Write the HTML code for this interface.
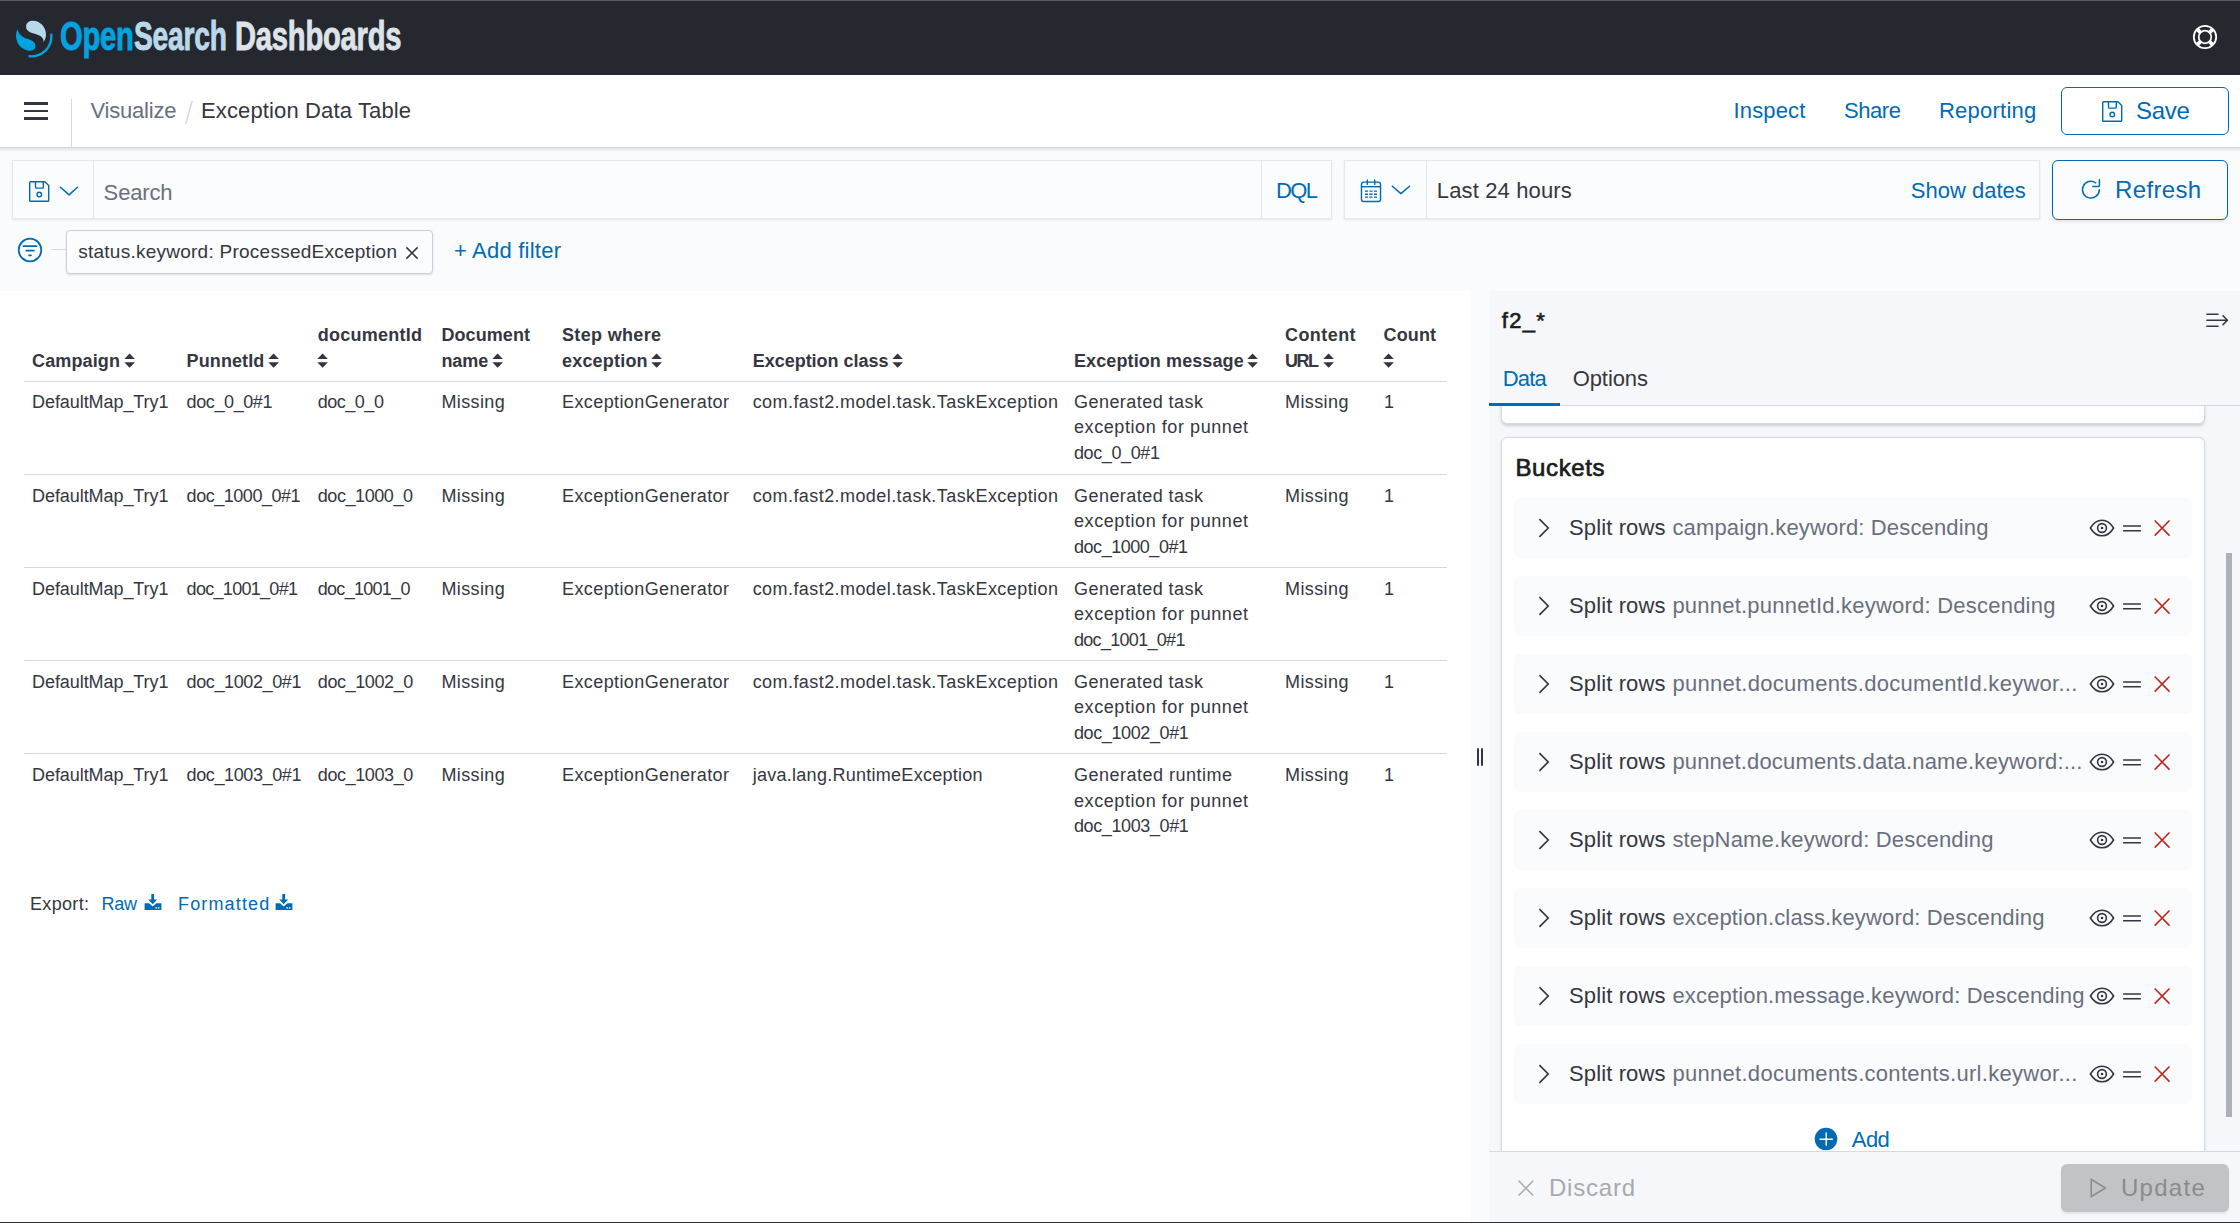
<!DOCTYPE html>
<html><head><meta charset="utf-8"><title>Exception Data Table - OpenSearch Dashboards</title>
<style>
html,body{margin:0;padding:0;width:2240px;height:1223px;overflow:hidden;background:#fff}
body{position:relative;font-family:"Liberation Sans",sans-serif;-webkit-font-smoothing:antialiased}
.t{position:absolute;white-space:nowrap}
svg{display:block}
</style></head><body>
<div style="position:absolute;left:0px;top:0px;width:2240px;height:75px;background:#25282f"></div>
<div style="position:absolute;left:0px;top:0px;width:2240px;height:1px;background:#5b5b59"></div>
<svg style="position:absolute;left:0px;top:0px" width="60" height="62" viewBox="0 0 60 62">
<path d="M43.4 42 C44.5 38 40 35 34 33.5 C29 32.3 26 30 26.1 26.5 C26.2 22.5 29.5 20.8 33 20.8 C40 20.8 46.2 27 46 35 C45.9 38 44.8 40.5 43.4 42 Z" fill="#b9d9eb"/>
<path d="M17.7 29.2 C15.2 33 15.5 40 19 45 C22 49 27 51 30.5 50.8 C34 50.6 35.6 48 35.4 45.5 C35.2 42 32 40.2 28 39 C23 37.5 18.5 35 17.7 29.2 Z" fill="#00a3e0"/>
<path d="M29.6 56.3 A20 20 0 0 0 51.3 34.8" stroke="#00a3e0" stroke-width="2.4" fill="none" stroke-linecap="round"/>
</svg>
<div class="t" style="left:59.5px;top:16.00px;font-size:40px;line-height:40px;color:#00a3e0;font-weight:700;transform-origin:0 0;transform:scaleX(0.7288);letter-spacing:-0.3px;-webkit-text-stroke:0.9px #00a3e0">Open</div>
<div class="t" style="left:134px;top:16.00px;font-size:40px;line-height:40px;color:#b9d9eb;font-weight:700;transform-origin:0 0;transform:scaleX(0.7045);letter-spacing:-0.3px;-webkit-text-stroke:0.9px #b9d9eb">Search</div>
<div class="t" style="left:235px;top:16.00px;font-size:40px;line-height:40px;color:#dde3e8;font-weight:700;transform-origin:0 0;transform:scaleX(0.7289);letter-spacing:-0.3px;-webkit-text-stroke:0.9px #dde3e8">Dashboards</div>
<svg style="position:absolute;left:2191px;top:23px" width="28" height="28" viewBox="0 0 28 28">
<circle cx="14" cy="14" r="11.2" stroke="#fff" stroke-width="1.8" fill="none"/>
<circle cx="14" cy="14" r="6.3" stroke="#fff" stroke-width="1.7" fill="none"/>
<path d="M6.4 6.4 L9.6 9.6 M21.6 6.4 L18.4 9.6 M6.4 21.6 L9.6 18.4 M21.6 21.6 L18.4 18.4" stroke="#fff" stroke-width="3.8"/>
</svg>
<div style="position:absolute;left:0px;top:75px;width:2240px;height:72px;background:#fff"></div>
<div style="position:absolute;left:24px;top:102px;width:24px;height:2.6px;background:#343741"></div>
<div style="position:absolute;left:24px;top:109.9px;width:24px;height:2.6px;background:#343741"></div>
<div style="position:absolute;left:24px;top:117.3px;width:24px;height:2.6px;background:#343741"></div>
<div style="position:absolute;left:71px;top:99px;width:1px;height:48px;background:#d3dae6"></div>
<div class="t" style="left:90.50px;top:100.00px;font-size:22px;line-height:22px;color:#69707d;font-weight:400;letter-spacing:-0.206px;">Visualize</div>
<svg style="position:absolute;left:180px;top:96px" width="20" height="32" viewBox="0 0 20 32"><path d="M12.0 5.4 L5.9 27.4" stroke="#d3dae6" stroke-width="1.6" stroke-linecap="round"/></svg>
<div class="t" style="left:201.00px;top:100.00px;font-size:22px;line-height:22px;color:#343741;font-weight:400;letter-spacing:0.131px;">Exception Data Table</div>
<div class="t" style="left:1733.50px;top:100.00px;font-size:22px;line-height:22px;color:#006bb4;font-weight:400;letter-spacing:0.145px;">Inspect</div>
<div class="t" style="left:1844.00px;top:100.00px;font-size:22px;line-height:22px;color:#006bb4;font-weight:400;letter-spacing:-0.427px;">Share</div>
<div class="t" style="left:1939.00px;top:100.00px;font-size:22px;line-height:22px;color:#006bb4;font-weight:400;letter-spacing:0.226px;">Reporting</div>
<div style="position:absolute;left:2061px;top:87.3px;width:167.7px;height:47.6px;box-sizing:border-box;border:1.5px solid #006bb4;border-radius:6px;background:#fff"></div>
<svg style="position:absolute;left:2099.60px;top:98.60px" width="26" height="26" viewBox="0 0 26 26">
<path d="M2.7 3.5 Q2.7 2.7 3.5 2.7 H17.9 L21.7 6.5 V21.5 Q21.7 22.3 20.9 22.3 H3.5 Q2.7 22.3 2.7 21.5 Z" stroke="#006bb4" stroke-width="1.4" fill="none" stroke-linejoin="round"/>
<path d="M8.5 2.7 V8.3 Q8.5 9.1 9.3 9.1 H15.5 Q16.3 9.1 16.3 8.3 V2.7" stroke="#006bb4" stroke-width="1.4" fill="none"/>
<circle cx="12.3" cy="15.5" r="2.3" stroke="#006bb4" stroke-width="1.4" fill="none"/>
</svg>
<div class="t" style="left:2136.00px;top:99.00px;font-size:24px;line-height:24px;color:#006bb4;font-weight:400;letter-spacing:-0.301px;">Save</div>
<div style="position:absolute;left:0px;top:147px;width:2240px;height:144px;background:#fafbfd"></div>
<div style="position:absolute;left:12px;top:160.4px;width:1319.6px;height:58.6px;box-sizing:border-box;background:#fbfcfd;border:1px solid #e4e8ef;box-shadow:0 1px 2px rgba(152,162,179,.25)"></div>
<div style="position:absolute;left:93px;top:161px;width:1px;height:57.5px;background:#e3e7ee"></div>
<div style="position:absolute;left:1260.5px;top:161px;width:1px;height:57.5px;background:#e3e7ee"></div>
<svg style="position:absolute;left:26.70px;top:178.50px" width="26" height="26" viewBox="0 0 26 26">
<path d="M2.7 3.5 Q2.7 2.7 3.5 2.7 H17.9 L21.7 6.5 V21.5 Q21.7 22.3 20.9 22.3 H3.5 Q2.7 22.3 2.7 21.5 Z" stroke="#006bb4" stroke-width="1.4" fill="none" stroke-linejoin="round"/>
<path d="M8.5 2.7 V8.3 Q8.5 9.1 9.3 9.1 H15.5 Q16.3 9.1 16.3 8.3 V2.7" stroke="#006bb4" stroke-width="1.4" fill="none"/>
<circle cx="12.3" cy="15.5" r="2.3" stroke="#006bb4" stroke-width="1.4" fill="none"/>
</svg>
<svg style="position:absolute;left:56px;top:182px" width="26" height="18" viewBox="0 0 26 18">
<path d="M4.4 5.2 L13.1 12.9 L21.4 5.2" stroke="#006bb4" stroke-width="1.5" fill="none" stroke-linecap="round" stroke-linejoin="round"/>
</svg>
<div class="t" style="left:103.60px;top:182.00px;font-size:22px;line-height:22px;color:#69707d;font-weight:400;letter-spacing:-0.141px;">Search</div>
<div class="t" style="left:1276.00px;top:180.00px;font-size:22px;line-height:22px;color:#006bb4;font-weight:400;letter-spacing:-1.618px;">DQL</div>
<div style="position:absolute;left:1344.3px;top:160.4px;width:695.3px;height:58.6px;box-sizing:border-box;background:#fbfcfd;border:1px solid #e4e8ef;box-shadow:0 1px 2px rgba(152,162,179,.25)"></div>
<div style="position:absolute;left:1425.5px;top:161px;width:1px;height:57.5px;background:#e3e7ee"></div>
<svg style="position:absolute;left:1352px;top:172px" width="70" height="38" viewBox="0 0 70 38">
<rect x="9.45" y="10.1" width="19.1" height="19.4" rx="2.3" stroke="#006bb4" stroke-width="1.4" fill="none"/>
<path d="M9.45 14.7 H28.55" stroke="#006bb4" stroke-width="1.4"/>
<path d="M15.3 8.0 V12.4 M22.7 8.0 V12.4" stroke="#006bb4" stroke-width="1.4" stroke-linecap="round"/>
<path d="M13 19.1 H16 M17.4 19.1 H20.5 M22 19.1 H25 M13 22.2 H16 M17.4 22.2 H20.5 M22 22.2 H25 M13 25.1 H16 M17.4 25.1 H20.5 M22 25.1 H25" stroke="#006bb4" stroke-width="1.4"/>
<path d="M40.3 14.2 L48.9 21.6 L57.5 14.2" stroke="#006bb4" stroke-width="1.5" fill="none" stroke-linecap="round" stroke-linejoin="round"/>
</svg>
<div class="t" style="left:1436.80px;top:180.00px;font-size:22px;line-height:22px;color:#343741;font-weight:400;letter-spacing:0.141px;">Last 24 hours</div>
<div class="t" style="left:1910.80px;top:180.00px;font-size:22px;line-height:22px;color:#006bb4;font-weight:400;letter-spacing:0.004px;">Show dates</div>
<div style="position:absolute;left:2052.3px;top:160px;width:176.2px;height:59.6px;box-sizing:border-box;border:1.5px solid #006bb4;border-radius:6px;background:#fbfcfd;box-shadow:0 2px 3px rgba(152,162,179,.25)"></div>
<svg style="position:absolute;left:2072px;top:172px" width="38" height="36" viewBox="0 0 38 36">
<path d="M23.72 10.78 A8.4 8.4 0 1 0 27.3 17.66" stroke="#006bb4" stroke-width="1.5" fill="none" stroke-linecap="round"/>
<path d="M27.4 7.8 V13.4 Q27.4 14.4 26.4 14.4 H20.8" stroke="#006bb4" stroke-width="1.5" fill="none" stroke-linecap="round"/>
</svg>
<div class="t" style="left:2115.00px;top:178.00px;font-size:24px;line-height:24px;color:#006bb4;font-weight:400;letter-spacing:0.361px;">Refresh</div>
<div style="position:absolute;left:0px;top:147px;width:2240px;height:1px;background:#d3dae6"></div>
<div style="position:absolute;left:0px;top:148px;width:2240px;height:4px;background:linear-gradient(180deg,rgba(200,206,216,.55),rgba(250,251,253,0))"></div>
<svg style="position:absolute;left:16px;top:236px" width="28" height="28" viewBox="0 0 28 28">
<circle cx="14" cy="14" r="11.3" stroke="#006bb4" stroke-width="1.8" fill="none"/>
<path d="M7.4 10.1 H20.6 M10.3 14.7 H17.9 M13.0 19.3 H15.0" stroke="#006bb4" stroke-width="1.7" stroke-linecap="round"/>
</svg>
<div style="position:absolute;left:51px;top:248.6px;width:15px;height:1.3px;background:#d3dae6"></div>
<div style="position:absolute;left:66px;top:229.5px;width:367px;height:44.2px;box-sizing:border-box;background:#fbfcfd;border:1.5px solid #c9d0dc;border-radius:4px;box-shadow:0 1px 2px rgba(152,162,179,.35)"></div>
<div class="t" style="left:78.20px;top:242.00px;font-size:19px;line-height:19px;color:#343741;font-weight:400;letter-spacing:0.252px;">status.keyword: ProcessedException</div>
<svg style="position:absolute;left:404px;top:244.5px" width="16" height="16" viewBox="0 0 16 16">
<path d="M2.4 2.4 L13.6 13.6 M13.6 2.4 L2.4 13.6" stroke="#343741" stroke-width="1.5"/>
</svg>
<div class="t" style="left:454.00px;top:240.00px;font-size:22px;line-height:22px;color:#006bb4;font-weight:400;letter-spacing:0.000px;">+</div>
<div class="t" style="left:472.00px;top:240.00px;font-size:22px;line-height:22px;color:#006bb4;font-weight:400;letter-spacing:0.242px;">Add filter</div>
<div style="position:absolute;left:0px;top:291px;width:1471px;height:932px;background:#fff"></div>
<div style="position:absolute;left:1471px;top:291px;width:18px;height:932px;background:#fafbfd"></div>
<div style="position:absolute;left:1476.9px;top:748px;width:1.9px;height:18px;background:#343741;border-radius:1px"></div>
<div style="position:absolute;left:1481.3px;top:748px;width:1.9px;height:18px;background:#343741;border-radius:1px"></div>
<div class="t" style="left:32.00px;top:352.00px;font-size:18px;line-height:18px;color:#343741;font-weight:700;letter-spacing:0.141px;">Campaign</div>
<svg style="position:absolute;left:123.5px;top:353.0px" width="12" height="16" viewBox="0 0 12 16">
<path d="M5.6 0.4 L10.9 6.0 H0.3 Z M5.6 14.7 L10.9 9.2 H0.3 Z" fill="#343741"/>
</svg>
<div class="t" style="left:186.60px;top:352.00px;font-size:18px;line-height:18px;color:#343741;font-weight:700;letter-spacing:0.101px;">PunnetId</div>
<svg style="position:absolute;left:267.8px;top:353.0px" width="12" height="16" viewBox="0 0 12 16">
<path d="M5.6 0.4 L10.9 6.0 H0.3 Z M5.6 14.7 L10.9 9.2 H0.3 Z" fill="#343741"/>
</svg>
<div class="t" style="left:317.80px;top:326.00px;font-size:18px;line-height:18px;color:#343741;font-weight:700;letter-spacing:0.245px;">documentId</div>
<svg style="position:absolute;left:317.3px;top:353.0px" width="12" height="16" viewBox="0 0 12 16">
<path d="M5.6 0.4 L10.9 6.0 H0.3 Z M5.6 14.7 L10.9 9.2 H0.3 Z" fill="#343741"/>
</svg>
<div class="t" style="left:441.40px;top:326.00px;font-size:18px;line-height:18px;color:#343741;font-weight:700;letter-spacing:0.085px;">Document</div>
<div class="t" style="left:441.40px;top:352.00px;font-size:18px;line-height:18px;color:#343741;font-weight:700;letter-spacing:-0.074px;">name</div>
<svg style="position:absolute;left:491.7px;top:353.0px" width="12" height="16" viewBox="0 0 12 16">
<path d="M5.6 0.4 L10.9 6.0 H0.3 Z M5.6 14.7 L10.9 9.2 H0.3 Z" fill="#343741"/>
</svg>
<div class="t" style="left:562.00px;top:326.00px;font-size:18px;line-height:18px;color:#343741;font-weight:700;letter-spacing:0.330px;">Step where</div>
<div class="t" style="left:562.00px;top:352.00px;font-size:18px;line-height:18px;color:#343741;font-weight:700;letter-spacing:0.197px;">exception</div>
<svg style="position:absolute;left:651.1px;top:353.0px" width="12" height="16" viewBox="0 0 12 16">
<path d="M5.6 0.4 L10.9 6.0 H0.3 Z M5.6 14.7 L10.9 9.2 H0.3 Z" fill="#343741"/>
</svg>
<div class="t" style="left:752.70px;top:352.00px;font-size:18px;line-height:18px;color:#343741;font-weight:700;letter-spacing:-0.019px;">Exception class</div>
<svg style="position:absolute;left:892.0px;top:353.0px" width="12" height="16" viewBox="0 0 12 16">
<path d="M5.6 0.4 L10.9 6.0 H0.3 Z M5.6 14.7 L10.9 9.2 H0.3 Z" fill="#343741"/>
</svg>
<div class="t" style="left:1074.00px;top:352.00px;font-size:18px;line-height:18px;color:#343741;font-weight:700;letter-spacing:0.102px;">Exception message</div>
<svg style="position:absolute;left:1247.2px;top:353.0px" width="12" height="16" viewBox="0 0 12 16">
<path d="M5.6 0.4 L10.9 6.0 H0.3 Z M5.6 14.7 L10.9 9.2 H0.3 Z" fill="#343741"/>
</svg>
<div class="t" style="left:1285.00px;top:326.00px;font-size:18px;line-height:18px;color:#343741;font-weight:700;letter-spacing:0.436px;">Content</div>
<div class="t" style="left:1285.00px;top:352.00px;font-size:18px;line-height:18px;color:#343741;font-weight:700;letter-spacing:-1.497px;">URL</div>
<svg style="position:absolute;left:1322.5px;top:353.0px" width="12" height="16" viewBox="0 0 12 16">
<path d="M5.6 0.4 L10.9 6.0 H0.3 Z M5.6 14.7 L10.9 9.2 H0.3 Z" fill="#343741"/>
</svg>
<div class="t" style="left:1383.50px;top:326.00px;font-size:18px;line-height:18px;color:#343741;font-weight:700;letter-spacing:0.130px;">Count</div>
<svg style="position:absolute;left:1383.3px;top:353.0px" width="12" height="16" viewBox="0 0 12 16">
<path d="M5.6 0.4 L10.9 6.0 H0.3 Z M5.6 14.7 L10.9 9.2 H0.3 Z" fill="#343741"/>
</svg>
<div style="position:absolute;left:24px;top:381px;width:1422.6px;height:1.2px;background:#d3dae6"></div>
<div style="position:absolute;left:24px;top:474px;width:1422.6px;height:1.2px;background:#d3dae6"></div>
<div style="position:absolute;left:24px;top:567px;width:1422.6px;height:1.2px;background:#d3dae6"></div>
<div style="position:absolute;left:24px;top:660px;width:1422.6px;height:1.2px;background:#d3dae6"></div>
<div style="position:absolute;left:24px;top:753px;width:1422.6px;height:1.2px;background:#d3dae6"></div>
<div class="t" style="left:32.00px;top:393.00px;font-size:18px;line-height:18px;color:#343741;font-weight:400;letter-spacing:-0.064px;">DefaultMap_Try1</div>
<div class="t" style="left:186.60px;top:393.00px;font-size:18px;line-height:18px;color:#343741;font-weight:400;letter-spacing:-0.398px;">doc_0_0#1</div>
<div class="t" style="left:317.80px;top:393.00px;font-size:18px;line-height:18px;color:#343741;font-weight:400;letter-spacing:-0.494px;">doc_0_0</div>
<div class="t" style="left:441.40px;top:393.00px;font-size:18px;line-height:18px;color:#343741;font-weight:400;letter-spacing:0.398px;">Missing</div>
<div class="t" style="left:562.00px;top:393.00px;font-size:18px;line-height:18px;color:#343741;font-weight:400;letter-spacing:0.406px;">ExceptionGenerator</div>
<div class="t" style="left:752.70px;top:393.00px;font-size:18px;line-height:18px;color:#343741;font-weight:400;letter-spacing:0.429px;">com.fast2.model.task.TaskException</div>
<div class="t" style="left:1074.00px;top:393.00px;font-size:18px;line-height:18px;color:#343741;font-weight:400;letter-spacing:0.456px;">Generated task</div>
<div class="t" style="left:1074.00px;top:418.00px;font-size:18px;line-height:18px;color:#343741;font-weight:400;letter-spacing:0.573px;">exception for punnet</div>
<div class="t" style="left:1074.00px;top:444.00px;font-size:18px;line-height:18px;color:#343741;font-weight:400;letter-spacing:-0.398px;">doc_0_0#1</div>
<div class="t" style="left:1285.00px;top:393.00px;font-size:18px;line-height:18px;color:#343741;font-weight:400;letter-spacing:0.398px;">Missing</div>
<div class="t" style="left:1384.00px;top:393.00px;font-size:18px;line-height:18px;color:#343741;font-weight:400;letter-spacing:0.000px;">1</div>
<div class="t" style="left:32.00px;top:487.00px;font-size:18px;line-height:18px;color:#343741;font-weight:400;letter-spacing:-0.064px;">DefaultMap_Try1</div>
<div class="t" style="left:186.60px;top:487.00px;font-size:18px;line-height:18px;color:#343741;font-weight:400;letter-spacing:-0.465px;">doc_1000_0#1</div>
<div class="t" style="left:317.80px;top:487.00px;font-size:18px;line-height:18px;color:#343741;font-weight:400;letter-spacing:-0.433px;">doc_1000_0</div>
<div class="t" style="left:441.40px;top:487.00px;font-size:18px;line-height:18px;color:#343741;font-weight:400;letter-spacing:0.398px;">Missing</div>
<div class="t" style="left:562.00px;top:487.00px;font-size:18px;line-height:18px;color:#343741;font-weight:400;letter-spacing:0.406px;">ExceptionGenerator</div>
<div class="t" style="left:752.70px;top:487.00px;font-size:18px;line-height:18px;color:#343741;font-weight:400;letter-spacing:0.429px;">com.fast2.model.task.TaskException</div>
<div class="t" style="left:1074.00px;top:487.00px;font-size:18px;line-height:18px;color:#343741;font-weight:400;letter-spacing:0.456px;">Generated task</div>
<div class="t" style="left:1074.00px;top:512.00px;font-size:18px;line-height:18px;color:#343741;font-weight:400;letter-spacing:0.573px;">exception for punnet</div>
<div class="t" style="left:1074.00px;top:538.00px;font-size:18px;line-height:18px;color:#343741;font-weight:400;letter-spacing:-0.465px;">doc_1000_0#1</div>
<div class="t" style="left:1285.00px;top:487.00px;font-size:18px;line-height:18px;color:#343741;font-weight:400;letter-spacing:0.398px;">Missing</div>
<div class="t" style="left:1384.00px;top:487.00px;font-size:18px;line-height:18px;color:#343741;font-weight:400;letter-spacing:0.000px;">1</div>
<div class="t" style="left:32.00px;top:580.00px;font-size:18px;line-height:18px;color:#343741;font-weight:400;letter-spacing:-0.064px;">DefaultMap_Try1</div>
<div class="t" style="left:186.60px;top:580.00px;font-size:18px;line-height:18px;color:#343741;font-weight:400;letter-spacing:-0.702px;">doc_1001_0#1</div>
<div class="t" style="left:317.80px;top:580.00px;font-size:18px;line-height:18px;color:#343741;font-weight:400;letter-spacing:-0.722px;">doc_1001_0</div>
<div class="t" style="left:441.40px;top:580.00px;font-size:18px;line-height:18px;color:#343741;font-weight:400;letter-spacing:0.398px;">Missing</div>
<div class="t" style="left:562.00px;top:580.00px;font-size:18px;line-height:18px;color:#343741;font-weight:400;letter-spacing:0.406px;">ExceptionGenerator</div>
<div class="t" style="left:752.70px;top:580.00px;font-size:18px;line-height:18px;color:#343741;font-weight:400;letter-spacing:0.429px;">com.fast2.model.task.TaskException</div>
<div class="t" style="left:1074.00px;top:580.00px;font-size:18px;line-height:18px;color:#343741;font-weight:400;letter-spacing:0.456px;">Generated task</div>
<div class="t" style="left:1074.00px;top:605.00px;font-size:18px;line-height:18px;color:#343741;font-weight:400;letter-spacing:0.573px;">exception for punnet</div>
<div class="t" style="left:1074.00px;top:631.00px;font-size:18px;line-height:18px;color:#343741;font-weight:400;letter-spacing:-0.702px;">doc_1001_0#1</div>
<div class="t" style="left:1285.00px;top:580.00px;font-size:18px;line-height:18px;color:#343741;font-weight:400;letter-spacing:0.398px;">Missing</div>
<div class="t" style="left:1384.00px;top:580.00px;font-size:18px;line-height:18px;color:#343741;font-weight:400;letter-spacing:0.000px;">1</div>
<div class="t" style="left:32.00px;top:673.00px;font-size:18px;line-height:18px;color:#343741;font-weight:400;letter-spacing:-0.064px;">DefaultMap_Try1</div>
<div class="t" style="left:186.60px;top:673.00px;font-size:18px;line-height:18px;color:#343741;font-weight:400;letter-spacing:-0.393px;">doc_1002_0#1</div>
<div class="t" style="left:317.80px;top:673.00px;font-size:18px;line-height:18px;color:#343741;font-weight:400;letter-spacing:-0.400px;">doc_1002_0</div>
<div class="t" style="left:441.40px;top:673.00px;font-size:18px;line-height:18px;color:#343741;font-weight:400;letter-spacing:0.398px;">Missing</div>
<div class="t" style="left:562.00px;top:673.00px;font-size:18px;line-height:18px;color:#343741;font-weight:400;letter-spacing:0.406px;">ExceptionGenerator</div>
<div class="t" style="left:752.70px;top:673.00px;font-size:18px;line-height:18px;color:#343741;font-weight:400;letter-spacing:0.429px;">com.fast2.model.task.TaskException</div>
<div class="t" style="left:1074.00px;top:673.00px;font-size:18px;line-height:18px;color:#343741;font-weight:400;letter-spacing:0.456px;">Generated task</div>
<div class="t" style="left:1074.00px;top:698.00px;font-size:18px;line-height:18px;color:#343741;font-weight:400;letter-spacing:0.573px;">exception for punnet</div>
<div class="t" style="left:1074.00px;top:724.00px;font-size:18px;line-height:18px;color:#343741;font-weight:400;letter-spacing:-0.393px;">doc_1002_0#1</div>
<div class="t" style="left:1285.00px;top:673.00px;font-size:18px;line-height:18px;color:#343741;font-weight:400;letter-spacing:0.398px;">Missing</div>
<div class="t" style="left:1384.00px;top:673.00px;font-size:18px;line-height:18px;color:#343741;font-weight:400;letter-spacing:0.000px;">1</div>
<div class="t" style="left:32.00px;top:766.00px;font-size:18px;line-height:18px;color:#343741;font-weight:400;letter-spacing:-0.064px;">DefaultMap_Try1</div>
<div class="t" style="left:186.60px;top:766.00px;font-size:18px;line-height:18px;color:#343741;font-weight:400;letter-spacing:-0.393px;">doc_1003_0#1</div>
<div class="t" style="left:317.80px;top:766.00px;font-size:18px;line-height:18px;color:#343741;font-weight:400;letter-spacing:-0.400px;">doc_1003_0</div>
<div class="t" style="left:441.40px;top:766.00px;font-size:18px;line-height:18px;color:#343741;font-weight:400;letter-spacing:0.398px;">Missing</div>
<div class="t" style="left:562.00px;top:766.00px;font-size:18px;line-height:18px;color:#343741;font-weight:400;letter-spacing:0.406px;">ExceptionGenerator</div>
<div class="t" style="left:752.70px;top:766.00px;font-size:18px;line-height:18px;color:#343741;font-weight:400;letter-spacing:0.271px;">java.lang.RuntimeException</div>
<div class="t" style="left:1074.00px;top:766.00px;font-size:18px;line-height:18px;color:#343741;font-weight:400;letter-spacing:0.495px;">Generated runtime</div>
<div class="t" style="left:1074.00px;top:792.00px;font-size:18px;line-height:18px;color:#343741;font-weight:400;letter-spacing:0.573px;">exception for punnet</div>
<div class="t" style="left:1074.00px;top:817.00px;font-size:18px;line-height:18px;color:#343741;font-weight:400;letter-spacing:-0.393px;">doc_1003_0#1</div>
<div class="t" style="left:1285.00px;top:766.00px;font-size:18px;line-height:18px;color:#343741;font-weight:400;letter-spacing:0.398px;">Missing</div>
<div class="t" style="left:1384.00px;top:766.00px;font-size:18px;line-height:18px;color:#343741;font-weight:400;letter-spacing:0.000px;">1</div>
<div class="t" style="left:30.00px;top:895.00px;font-size:18px;line-height:18px;color:#343741;font-weight:400;letter-spacing:0.329px;">Export:</div>
<div class="t" style="left:101.60px;top:895.00px;font-size:18px;line-height:18px;color:#006bb4;font-weight:400;letter-spacing:-0.305px;">Raw</div>
<div class="t" style="left:178.00px;top:895.00px;font-size:18px;line-height:18px;color:#006bb4;font-weight:400;letter-spacing:1.146px;">Formatted</div>
<svg style="position:absolute;left:143.5px;top:893px" width="18" height="18" viewBox="0 0 18 18">
<path d="M7.3 1 H10.1 V6.6 H13.2 L8.7 11.2 L4.2 6.6 H7.3 Z" fill="#006bb4"/>
<path d="M0.6 10.2 H5.0 L8.7 13.6 L12.4 10.2 H17.4 V17 H0.6 Z" fill="#006bb4"/>
<rect x="11.4" y="14.2" width="1.5" height="1.4" fill="#fff"/><rect x="13.9" y="14.2" width="1.5" height="1.4" fill="#fff"/>
</svg>
<svg style="position:absolute;left:275px;top:893px" width="18" height="18" viewBox="0 0 18 18">
<path d="M7.3 1 H10.1 V6.6 H13.2 L8.7 11.2 L4.2 6.6 H7.3 Z" fill="#006bb4"/>
<path d="M0.6 10.2 H5.0 L8.7 13.6 L12.4 10.2 H17.4 V17 H0.6 Z" fill="#006bb4"/>
<rect x="11.4" y="14.2" width="1.5" height="1.4" fill="#fff"/><rect x="13.9" y="14.2" width="1.5" height="1.4" fill="#fff"/>
</svg>
<div style="position:absolute;left:1489px;top:291px;width:751px;height:932px;background:#f5f7fa"></div>
<svg style="position:absolute;left:2204px;top:309px" width="26" height="22" viewBox="0 0 26 22">
<path d="M2.9 5.2 H14.0 M2.9 11.3 H22.8 M2.9 17.2 H14.0" stroke="#343741" stroke-width="1.6" stroke-linecap="round"/>
<path d="M19.0 6.8 L23.3 11.3 L19.0 15.7" stroke="#343741" stroke-width="1.6" fill="none" stroke-linecap="round"/>
</svg>
<div class="t" style="left:1502.70px;top:368.00px;font-size:22px;line-height:22px;color:#006bb4;font-weight:400;letter-spacing:-0.824px;">Data</div>
<div class="t" style="left:1572.70px;top:368.00px;font-size:22px;line-height:22px;color:#343741;font-weight:400;letter-spacing:-0.086px;">Options</div>
<div style="position:absolute;left:1489px;top:404.5px;width:751px;height:1.2px;background:#d3dae6"></div>
<div style="position:absolute;left:1489px;top:402.8px;width:71px;height:3.2px;background:#006bb4"></div>
<div style="position:absolute;left:1501px;top:380px;width:704px;height:44.3px;box-sizing:border-box;background:#fff;border:1px solid #d3dae6;border-top:none;border-radius:0 0 6px 6px;box-shadow:0 2px 3px rgba(152,162,179,.45)"></div>
<div style="position:absolute;left:1489px;top:291px;width:751px;height:113.5px;background:#f5f7fa"></div>
<div style="position:absolute;left:1489px;top:404.5px;width:751px;height:1.2px;background:#d3dae6"></div>
<div style="position:absolute;left:1489px;top:402.8px;width:71px;height:3.2px;background:#006bb4"></div>
<div style="position:absolute;left:1501px;top:437px;width:704px;height:760px;box-sizing:border-box;background:#fff;border:1px solid #d3dae6;border-radius:6px;box-shadow:0 1px 3px rgba(152,162,179,.25)"></div>
<div class="t" style="left:1515.50px;top:456.00px;font-size:24px;line-height:24px;color:#1a1c21;font-weight:400;letter-spacing:0.605px;-webkit-text-stroke:0.7px #1a1c21">Buckets</div>
<div style="position:absolute;left:1514.3px;top:498px;width:677.5px;height:59.5px;background:#fafbfd;border-radius:6px"></div>
<svg style="position:absolute;left:1534px;top:515.5px" width="20" height="24" viewBox="0 0 20 24">
<path d="M5.4 3.2 L14.2 12 L5.4 20.8" stroke="#343741" stroke-width="1.7" fill="none"/>
</svg>
<div class="t" style="left:1569.00px;top:517.00px;font-size:22px;line-height:22px;color:#343741;font-weight:400;letter-spacing:0.127px;">Split rows</div>
<div class="t" style="left:1672.40px;top:517.00px;font-size:22px;line-height:22px;color:#69707d;font-weight:400;letter-spacing:0.154px;">campaign.keyword: Descending</div>
<svg style="position:absolute;left:2088px;top:515.5px" width="28" height="24" viewBox="0 0 28 24">
<path d="M2.4 12 C5.6 6.6 9.6 4.2 14 4.2 C18.4 4.2 22.4 6.6 25.6 12 C22.4 17.4 18.4 19.8 14 19.8 C9.6 19.8 5.6 17.4 2.4 12 Z" stroke="#343741" stroke-width="1.6" fill="none"/>
<circle cx="14" cy="12" r="4.4" stroke="#343741" stroke-width="1.6" fill="none"/>
<circle cx="14" cy="12" r="1.3" fill="#343741"/>
</svg>
<svg style="position:absolute;left:2120px;top:519.5px" width="24" height="16" viewBox="0 0 24 16"><path d="M3.1 6.0 H20.9 M3.1 10.8 H20.9" stroke="#343741" stroke-width="1.5"/></svg>
<svg style="position:absolute;left:2150px;top:515.5px" width="24" height="24" viewBox="0 0 24 24">
<path d="M4.7 4.5 L19.5 19.6 M19.5 4.5 L4.7 19.6" stroke="#bd271e" stroke-width="1.6"/>
</svg>
<div style="position:absolute;left:1514.3px;top:576px;width:677.5px;height:59.5px;background:#fafbfd;border-radius:6px"></div>
<svg style="position:absolute;left:1534px;top:593.5px" width="20" height="24" viewBox="0 0 20 24">
<path d="M5.4 3.2 L14.2 12 L5.4 20.8" stroke="#343741" stroke-width="1.7" fill="none"/>
</svg>
<div class="t" style="left:1569.00px;top:595.00px;font-size:22px;line-height:22px;color:#343741;font-weight:400;letter-spacing:0.127px;">Split rows</div>
<div class="t" style="left:1672.40px;top:595.00px;font-size:22px;line-height:22px;color:#69707d;font-weight:400;letter-spacing:0.221px;">punnet.punnetId.keyword: Descending</div>
<svg style="position:absolute;left:2088px;top:593.5px" width="28" height="24" viewBox="0 0 28 24">
<path d="M2.4 12 C5.6 6.6 9.6 4.2 14 4.2 C18.4 4.2 22.4 6.6 25.6 12 C22.4 17.4 18.4 19.8 14 19.8 C9.6 19.8 5.6 17.4 2.4 12 Z" stroke="#343741" stroke-width="1.6" fill="none"/>
<circle cx="14" cy="12" r="4.4" stroke="#343741" stroke-width="1.6" fill="none"/>
<circle cx="14" cy="12" r="1.3" fill="#343741"/>
</svg>
<svg style="position:absolute;left:2120px;top:597.5px" width="24" height="16" viewBox="0 0 24 16"><path d="M3.1 6.0 H20.9 M3.1 10.8 H20.9" stroke="#343741" stroke-width="1.5"/></svg>
<svg style="position:absolute;left:2150px;top:593.5px" width="24" height="24" viewBox="0 0 24 24">
<path d="M4.7 4.5 L19.5 19.6 M19.5 4.5 L4.7 19.6" stroke="#bd271e" stroke-width="1.6"/>
</svg>
<div style="position:absolute;left:1514.3px;top:654px;width:677.5px;height:59.5px;background:#fafbfd;border-radius:6px"></div>
<svg style="position:absolute;left:1534px;top:671.5px" width="20" height="24" viewBox="0 0 20 24">
<path d="M5.4 3.2 L14.2 12 L5.4 20.8" stroke="#343741" stroke-width="1.7" fill="none"/>
</svg>
<div class="t" style="left:1569.00px;top:673.00px;font-size:22px;line-height:22px;color:#343741;font-weight:400;letter-spacing:0.127px;">Split rows</div>
<div class="t" style="left:1672.40px;top:673.00px;font-size:22px;line-height:22px;color:#69707d;font-weight:400;letter-spacing:0.277px;">punnet.documents.documentId.keywor...</div>
<svg style="position:absolute;left:2088px;top:671.5px" width="28" height="24" viewBox="0 0 28 24">
<path d="M2.4 12 C5.6 6.6 9.6 4.2 14 4.2 C18.4 4.2 22.4 6.6 25.6 12 C22.4 17.4 18.4 19.8 14 19.8 C9.6 19.8 5.6 17.4 2.4 12 Z" stroke="#343741" stroke-width="1.6" fill="none"/>
<circle cx="14" cy="12" r="4.4" stroke="#343741" stroke-width="1.6" fill="none"/>
<circle cx="14" cy="12" r="1.3" fill="#343741"/>
</svg>
<svg style="position:absolute;left:2120px;top:675.5px" width="24" height="16" viewBox="0 0 24 16"><path d="M3.1 6.0 H20.9 M3.1 10.8 H20.9" stroke="#343741" stroke-width="1.5"/></svg>
<svg style="position:absolute;left:2150px;top:671.5px" width="24" height="24" viewBox="0 0 24 24">
<path d="M4.7 4.5 L19.5 19.6 M19.5 4.5 L4.7 19.6" stroke="#bd271e" stroke-width="1.6"/>
</svg>
<div style="position:absolute;left:1514.3px;top:732px;width:677.5px;height:59.5px;background:#fafbfd;border-radius:6px"></div>
<svg style="position:absolute;left:1534px;top:749.5px" width="20" height="24" viewBox="0 0 20 24">
<path d="M5.4 3.2 L14.2 12 L5.4 20.8" stroke="#343741" stroke-width="1.7" fill="none"/>
</svg>
<div class="t" style="left:1569.00px;top:751.00px;font-size:22px;line-height:22px;color:#343741;font-weight:400;letter-spacing:0.127px;">Split rows</div>
<div class="t" style="left:1672.40px;top:751.00px;font-size:22px;line-height:22px;color:#69707d;font-weight:400;letter-spacing:0.174px;">punnet.documents.data.name.keyword:...</div>
<svg style="position:absolute;left:2088px;top:749.5px" width="28" height="24" viewBox="0 0 28 24">
<path d="M2.4 12 C5.6 6.6 9.6 4.2 14 4.2 C18.4 4.2 22.4 6.6 25.6 12 C22.4 17.4 18.4 19.8 14 19.8 C9.6 19.8 5.6 17.4 2.4 12 Z" stroke="#343741" stroke-width="1.6" fill="none"/>
<circle cx="14" cy="12" r="4.4" stroke="#343741" stroke-width="1.6" fill="none"/>
<circle cx="14" cy="12" r="1.3" fill="#343741"/>
</svg>
<svg style="position:absolute;left:2120px;top:753.5px" width="24" height="16" viewBox="0 0 24 16"><path d="M3.1 6.0 H20.9 M3.1 10.8 H20.9" stroke="#343741" stroke-width="1.5"/></svg>
<svg style="position:absolute;left:2150px;top:749.5px" width="24" height="24" viewBox="0 0 24 24">
<path d="M4.7 4.5 L19.5 19.6 M19.5 4.5 L4.7 19.6" stroke="#bd271e" stroke-width="1.6"/>
</svg>
<div style="position:absolute;left:1514.3px;top:810px;width:677.5px;height:59.5px;background:#fafbfd;border-radius:6px"></div>
<svg style="position:absolute;left:1534px;top:827.5px" width="20" height="24" viewBox="0 0 20 24">
<path d="M5.4 3.2 L14.2 12 L5.4 20.8" stroke="#343741" stroke-width="1.7" fill="none"/>
</svg>
<div class="t" style="left:1569.00px;top:829.00px;font-size:22px;line-height:22px;color:#343741;font-weight:400;letter-spacing:0.127px;">Split rows</div>
<div class="t" style="left:1672.40px;top:829.00px;font-size:22px;line-height:22px;color:#69707d;font-weight:400;letter-spacing:0.159px;">stepName.keyword: Descending</div>
<svg style="position:absolute;left:2088px;top:827.5px" width="28" height="24" viewBox="0 0 28 24">
<path d="M2.4 12 C5.6 6.6 9.6 4.2 14 4.2 C18.4 4.2 22.4 6.6 25.6 12 C22.4 17.4 18.4 19.8 14 19.8 C9.6 19.8 5.6 17.4 2.4 12 Z" stroke="#343741" stroke-width="1.6" fill="none"/>
<circle cx="14" cy="12" r="4.4" stroke="#343741" stroke-width="1.6" fill="none"/>
<circle cx="14" cy="12" r="1.3" fill="#343741"/>
</svg>
<svg style="position:absolute;left:2120px;top:831.5px" width="24" height="16" viewBox="0 0 24 16"><path d="M3.1 6.0 H20.9 M3.1 10.8 H20.9" stroke="#343741" stroke-width="1.5"/></svg>
<svg style="position:absolute;left:2150px;top:827.5px" width="24" height="24" viewBox="0 0 24 24">
<path d="M4.7 4.5 L19.5 19.6 M19.5 4.5 L4.7 19.6" stroke="#bd271e" stroke-width="1.6"/>
</svg>
<div style="position:absolute;left:1514.3px;top:888px;width:677.5px;height:59.5px;background:#fafbfd;border-radius:6px"></div>
<svg style="position:absolute;left:1534px;top:905.5px" width="20" height="24" viewBox="0 0 20 24">
<path d="M5.4 3.2 L14.2 12 L5.4 20.8" stroke="#343741" stroke-width="1.7" fill="none"/>
</svg>
<div class="t" style="left:1569.00px;top:907.00px;font-size:22px;line-height:22px;color:#343741;font-weight:400;letter-spacing:0.127px;">Split rows</div>
<div class="t" style="left:1672.40px;top:907.00px;font-size:22px;line-height:22px;color:#69707d;font-weight:400;letter-spacing:0.151px;">exception.class.keyword: Descending</div>
<svg style="position:absolute;left:2088px;top:905.5px" width="28" height="24" viewBox="0 0 28 24">
<path d="M2.4 12 C5.6 6.6 9.6 4.2 14 4.2 C18.4 4.2 22.4 6.6 25.6 12 C22.4 17.4 18.4 19.8 14 19.8 C9.6 19.8 5.6 17.4 2.4 12 Z" stroke="#343741" stroke-width="1.6" fill="none"/>
<circle cx="14" cy="12" r="4.4" stroke="#343741" stroke-width="1.6" fill="none"/>
<circle cx="14" cy="12" r="1.3" fill="#343741"/>
</svg>
<svg style="position:absolute;left:2120px;top:909.5px" width="24" height="16" viewBox="0 0 24 16"><path d="M3.1 6.0 H20.9 M3.1 10.8 H20.9" stroke="#343741" stroke-width="1.5"/></svg>
<svg style="position:absolute;left:2150px;top:905.5px" width="24" height="24" viewBox="0 0 24 24">
<path d="M4.7 4.5 L19.5 19.6 M19.5 4.5 L4.7 19.6" stroke="#bd271e" stroke-width="1.6"/>
</svg>
<div style="position:absolute;left:1514.3px;top:966px;width:677.5px;height:59.5px;background:#fafbfd;border-radius:6px"></div>
<svg style="position:absolute;left:1534px;top:983.5px" width="20" height="24" viewBox="0 0 20 24">
<path d="M5.4 3.2 L14.2 12 L5.4 20.8" stroke="#343741" stroke-width="1.7" fill="none"/>
</svg>
<div class="t" style="left:1569.00px;top:985.00px;font-size:22px;line-height:22px;color:#343741;font-weight:400;letter-spacing:0.127px;">Split rows</div>
<div class="t" style="left:1672.40px;top:985.00px;font-size:22px;line-height:22px;color:#69707d;font-weight:400;letter-spacing:0.167px;">exception.message.keyword: Descending</div>
<svg style="position:absolute;left:2088px;top:983.5px" width="28" height="24" viewBox="0 0 28 24">
<path d="M2.4 12 C5.6 6.6 9.6 4.2 14 4.2 C18.4 4.2 22.4 6.6 25.6 12 C22.4 17.4 18.4 19.8 14 19.8 C9.6 19.8 5.6 17.4 2.4 12 Z" stroke="#343741" stroke-width="1.6" fill="none"/>
<circle cx="14" cy="12" r="4.4" stroke="#343741" stroke-width="1.6" fill="none"/>
<circle cx="14" cy="12" r="1.3" fill="#343741"/>
</svg>
<svg style="position:absolute;left:2120px;top:987.5px" width="24" height="16" viewBox="0 0 24 16"><path d="M3.1 6.0 H20.9 M3.1 10.8 H20.9" stroke="#343741" stroke-width="1.5"/></svg>
<svg style="position:absolute;left:2150px;top:983.5px" width="24" height="24" viewBox="0 0 24 24">
<path d="M4.7 4.5 L19.5 19.6 M19.5 4.5 L4.7 19.6" stroke="#bd271e" stroke-width="1.6"/>
</svg>
<div style="position:absolute;left:1514.3px;top:1044px;width:677.5px;height:59.5px;background:#fafbfd;border-radius:6px"></div>
<svg style="position:absolute;left:1534px;top:1061.5px" width="20" height="24" viewBox="0 0 20 24">
<path d="M5.4 3.2 L14.2 12 L5.4 20.8" stroke="#343741" stroke-width="1.7" fill="none"/>
</svg>
<div class="t" style="left:1569.00px;top:1063.00px;font-size:22px;line-height:22px;color:#343741;font-weight:400;letter-spacing:0.127px;">Split rows</div>
<div class="t" style="left:1672.40px;top:1063.00px;font-size:22px;line-height:22px;color:#69707d;font-weight:400;letter-spacing:0.295px;">punnet.documents.contents.url.keywor...</div>
<svg style="position:absolute;left:2088px;top:1061.5px" width="28" height="24" viewBox="0 0 28 24">
<path d="M2.4 12 C5.6 6.6 9.6 4.2 14 4.2 C18.4 4.2 22.4 6.6 25.6 12 C22.4 17.4 18.4 19.8 14 19.8 C9.6 19.8 5.6 17.4 2.4 12 Z" stroke="#343741" stroke-width="1.6" fill="none"/>
<circle cx="14" cy="12" r="4.4" stroke="#343741" stroke-width="1.6" fill="none"/>
<circle cx="14" cy="12" r="1.3" fill="#343741"/>
</svg>
<svg style="position:absolute;left:2120px;top:1065.5px" width="24" height="16" viewBox="0 0 24 16"><path d="M3.1 6.0 H20.9 M3.1 10.8 H20.9" stroke="#343741" stroke-width="1.5"/></svg>
<svg style="position:absolute;left:2150px;top:1061.5px" width="24" height="24" viewBox="0 0 24 24">
<path d="M4.7 4.5 L19.5 19.6 M19.5 4.5 L4.7 19.6" stroke="#bd271e" stroke-width="1.6"/>
</svg>
<div style="position:absolute;left:2225.8px;top:552.6px;width:6.2px;height:564.3px;background:#abb0b9"></div>
<svg style="position:absolute;left:1814px;top:1127px" width="24" height="24" viewBox="0 0 24 24">
<circle cx="12" cy="12" r="11.3" fill="#006bb4"/>
<path d="M12.2 5.6 V18.8 M5.6 12.2 H18.8" stroke="#fff" stroke-width="1.4"/>
</svg>
<div class="t" style="left:1851.80px;top:1129.00px;font-size:22px;line-height:22px;color:#006bb4;font-weight:400;letter-spacing:-0.572px;">Add</div>
<div style="position:absolute;left:1489px;top:1151px;width:751px;height:72px;background:#f5f7fa;border-top:1.2px solid #d3dae6"></div>
<svg style="position:absolute;left:1516px;top:1178px" width="20" height="20" viewBox="0 0 20 20">
<path d="M2.6 2.8 L17.2 17.4 M17.2 2.8 L2.6 17.4" stroke="#a4a6aa" stroke-width="1.4"/>
</svg>
<div class="t" style="left:1549.00px;top:1176.00px;font-size:24px;line-height:24px;color:#a8aaae;font-weight:400;letter-spacing:0.775px;">Discard</div>
<div style="position:absolute;left:2061.2px;top:1164px;width:167.5px;height:47.6px;background:#c2c3c6;border-radius:6px;box-shadow:0 2px 2px rgba(152,162,179,.2)"></div>
<svg style="position:absolute;left:2088px;top:1176px" width="20" height="24" viewBox="0 0 20 24">
<path d="M3.2 3.4 L17.4 12 L3.2 20.6 Z" stroke="#8a8c91" stroke-width="1.6" fill="none" stroke-linejoin="round"/>
</svg>
<div class="t" style="left:2121.00px;top:1176.00px;font-size:24px;line-height:24px;color:#898b90;font-weight:400;letter-spacing:1.282px;">Update</div>
<div style="position:absolute;left:0px;top:1222px;width:2240px;height:1px;background:#25333a"></div>
<div class="t" style="left:1502.70px;top:368.00px;font-size:22px;line-height:22px;color:#006bb4;font-weight:400;letter-spacing:-0.824px;">Data</div>
<div class="t" style="left:1572.70px;top:368.00px;font-size:22px;line-height:22px;color:#343741;font-weight:400;letter-spacing:-0.086px;">Options</div>
<div class="t" style="left:1501.80px;top:310.00px;font-size:22px;line-height:22px;color:#1a1c21;font-weight:400;letter-spacing:1.285px;-webkit-text-stroke:0.6px #1a1c21">f2_*</div>
<svg style="position:absolute;left:2204px;top:309px" width="26" height="22" viewBox="0 0 26 22">
<path d="M2.9 5.2 H14.0 M2.9 11.3 H22.8 M2.9 17.2 H14.0" stroke="#343741" stroke-width="1.6" stroke-linecap="round"/>
<path d="M19.0 6.8 L23.3 11.3 L19.0 15.7" stroke="#343741" stroke-width="1.6" fill="none" stroke-linecap="round"/>
</svg>
</body></html>
